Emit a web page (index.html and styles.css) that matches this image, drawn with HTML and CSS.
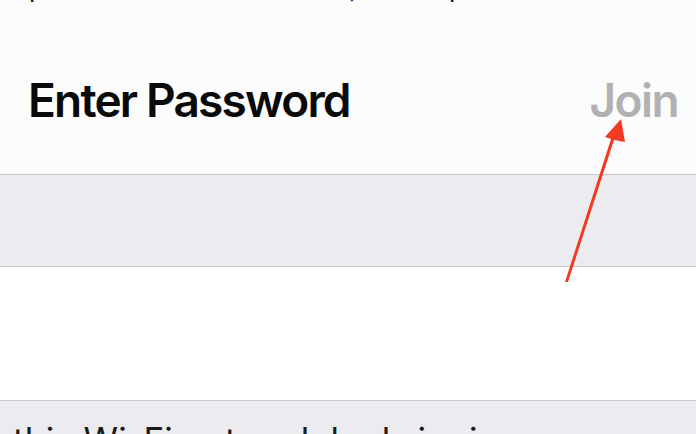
FILE: index.html
```html
<!DOCTYPE html>
<html>
<head>
<meta charset="utf-8">
<link rel="stylesheet" href="styles.css">
</head>
<body>
<div class="screen">
  <header class="header">
    <div class="peek"><span class="peek-text">password for this network, then tap</span></div>
    <nav class="navbar">
      <span class="title">Enter Password</span>
      <span class="join">Join</span>
    </nav>
  </header>
  <div class="band"></div>
  <div class="field"></div>
  <footer class="footer">
    <p class="footer-text">this Wi-Fi network by bringing your</p>
  </footer>
  <svg class="arrow" width="696" height="434" viewBox="0 0 696 434">
    <polygon points="565,282 568,282 614,140 625,142 621,119 605,137 611,139" fill="#f23a22"/>
  </svg>
</div>
</body>
</html>
```
FILE: styles.css
```css
html, body {
  margin: 0;
  padding: 0;
}
body {
  width: 696px;
  height: 434px;
  overflow: hidden;
  background: #fcfcfd;
  font-family: Inter, "Liberation Sans", sans-serif;
}
.screen {
  position: relative;
  width: 696px;
  height: 434px;
  overflow: hidden;
}
.header {
  background: #fcfcfd;
  height: 174px;
  border-bottom: 1px solid #c8c8cc;
  display: flex;
  flex-direction: column;
}
.peek {
  height: 4px;
  flex: none;
  overflow: hidden;
  padding-left: 29px;
}
.peek-text {
  display: block;
  font-size: 26px;
  line-height: 26px;
  margin-top: -25px;
  color: #111;
  white-space: nowrap;
}
.navbar {
  display: flex;
  justify-content: space-between;
  align-items: baseline;
  padding: 68px 18px 0 28px;
}
.title {
  font-size: 46px;
  font-weight: 600;
  letter-spacing: -1.8px;
  color: #0a0a0a;
  line-height: 56px;
}
.join {
  font-size: 46px;
  font-weight: 600;
  letter-spacing: -1.6px;
  color: #b1b1b4;
  line-height: 56px;
}
.band {
  height: 91px;
  background: #ebebf0;
  border-bottom: 1px solid #c8c8cc;
}
.field {
  height: 133px;
  background: #ffffff;
  border-bottom: 1px solid #c8c8cc;
}
.footer {
  background: #ebebf0;
  height: 80px;
  padding-left: 13px;
}
.footer-text {
  margin: 0;
  padding-top: 19px;
  font-size: 35px;
  line-height: 40px;
  letter-spacing: 0.3px;
  color: #1a1a1a;
  white-space: nowrap;
}
.arrow {
  position: absolute;
  left: 0;
  top: 0;
}
```
